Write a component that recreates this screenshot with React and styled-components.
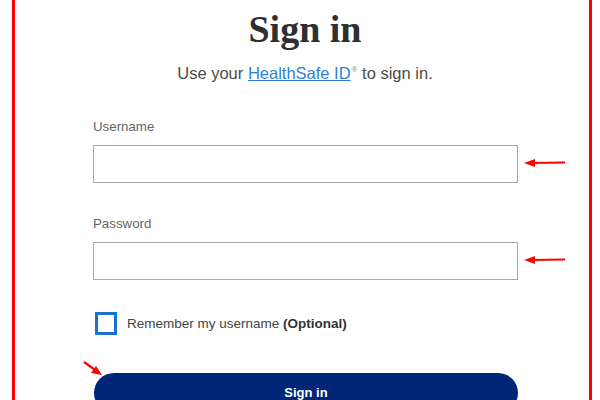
import styled, { createGlobalStyle } from 'styled-components'

const GlobalStyle = createGlobalStyle`
  html, body {
    margin: 0;
    background: #fff;
    font-family: 'Liberation Sans', Arial, sans-serif;
  }
`

const Frame = styled.div`
  box-sizing: border-box;
  margin-left: 12px;
  width: 580px;
  height: 400px;
  border-left: 3px solid #ff0000;
  border-right: 3px solid #ff0000;
  overflow: hidden;
`

const Header = styled.header`
  text-align: center;
  padding-left: 6px;
`

const Title = styled.h1`
  margin: 7px 0 0;
  font-family: 'Liberation Serif', 'Times New Roman', serif;
  font-size: 38px;
  line-height: 44px;
  font-weight: 700;
  color: #2f2f2f;
`

const Subtitle = styled.p`
  margin: 9px 0 0;
  font-size: 16.5px;
  line-height: 20px;
  color: #4b4b4b;

  a {
    color: #2e7fd2;
    text-decoration: underline;
  }

  sup {
    font-size: 8px;
    color: #888;
    margin-left: 1px;
  }
`

const Form = styled.form`
  width: 425px;
  margin: 36px 0 0 78px;
  display: flex;
  flex-direction: column;
`

const Field = styled.div`
  position: relative;
  display: flex;
  flex-direction: column;
  gap: 10px;
  margin-bottom: ${(p) => p.$spacing}px;
`

const Label = styled.label`
  font-size: 13.3px;
  line-height: 16px;
  color: #666;
`

const Input = styled.input`
  box-sizing: border-box;
  width: 100%;
  height: 38px;
  border: 1px solid #a8a8a8;
  border-radius: 0;
  background: #fff;
  margin: 0;
`

const Pointer = styled.svg`
  position: absolute;
  left: calc(100% + 6px);
  bottom: 15px;
`

const CheckRow = styled.label`
  display: flex;
  align-items: center;
  gap: 10px;
  font-size: 13.5px;
  color: #444;

  strong {
    font-weight: 700;
    color: #333;
  }
`

const Box = styled.span`
  box-sizing: border-box;
  width: 22px;
  height: 23px;
  margin-left: 2px;
  border: 3px solid #1a73d2;
  background: #fff;
`

const ButtonWrap = styled.div`
  position: relative;
  margin-top: 38px;
`

const SubmitButton = styled.button`
  width: 424px;
  height: 40px;
  margin-left: 1px;
  border: none;
  border-radius: 20px;
  background: #002677;
  color: #fff;
  font-family: 'Liberation Sans', Arial, sans-serif;
  font-size: 13px;
  font-weight: 700;
`

const CornerPointer = styled.svg`
  position: absolute;
  left: -10px;
  top: -12px;
`

const LeftArrow = () => (
  <Pointer width='42' height='10' viewBox='0 0 42 10'>
    <line x1='8' y1='5' x2='41' y2='4.5' stroke='#f00' strokeWidth='2.2' />
    <polygon points='0,5 11,1 11,9' fill='#f00' />
  </Pointer>
)

export default function App() {
  return (
    <>
      <GlobalStyle />
      <Frame>
        <Header>
          <Title>Sign in</Title>
          <Subtitle>
            Use your <a href='#'>HealthSafe ID</a>
            <sup>®</sup> to sign in.
          </Subtitle>
        </Header>
        <Form>
          <Field $spacing={33}>
            <Label>Username</Label>
            <Input type='text' />
            <LeftArrow />
          </Field>
          <Field $spacing={32}>
            <Label>Password</Label>
            <Input type='password' />
            <LeftArrow />
          </Field>
          <CheckRow>
            <Box />
            <span>
              Remember my username <strong>(Optional)</strong>
            </span>
          </CheckRow>
          <ButtonWrap>
            <CornerPointer width='20' height='16' viewBox='0 0 20 16'>
              <line x1='1' y1='1' x2='13' y2='9.5' stroke='#f00' strokeWidth='2.2' />
              <polygon points='19,14 8,12 13,5' fill='#f00' />
            </CornerPointer>
            <SubmitButton type='button'>Sign in</SubmitButton>
          </ButtonWrap>
        </Form>
      </Frame>
    </>
  )
}
